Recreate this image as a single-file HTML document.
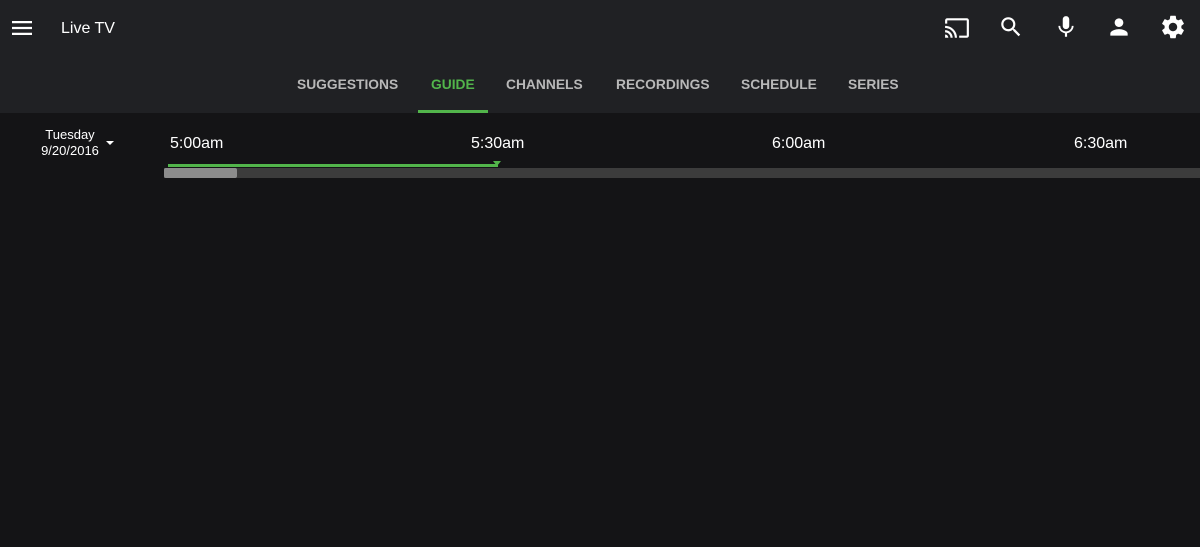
<!DOCTYPE html>
<html><head><style>
body{margin:0;width:1200px;height:547px;background:#141416;font-family:"Liberation Sans",sans-serif;overflow:hidden;position:relative;color:#fff}
.hdr{position:absolute;left:0;top:0;width:1200px;height:113px;background:#202124}
.t{position:absolute;white-space:nowrap}
.tab{position:absolute;top:77px;font-size:13.8px;font-weight:bold;color:#b8b8b8}
svg{position:absolute}
</style></head><body>
<div class="hdr"></div>
<svg style="left:10px;top:16px" width="24" height="24" viewBox="0 0 24 24"><path fill="#fff" d="M2 5h20v2.2H2zM2 10.9h20v2.2H2zM2 16.8h20v2.2H2z"/></svg>
<div class="t" style="left:61px;top:20px;font-size:16px">Live TV</div>
<svg style="left:944px;top:15px" width="26" height="26" viewBox="0 0 24 24"><path fill="#fff" d="M21 3H3c-1.1 0-2 .9-2 2v3h2V5h18v14h-7v2h7c1.1 0 2-.9 2-2V5c0-1.1-.9-2-2-2zM1 18v3h3c0-1.660-1.34-3-3-3zm0-4v2c2.760 0 5 2.240 5 5h2c0-3.870-3.130-7-7-7zm0-4v2c4.970 0 9 4.030 9 9h2c0-6.080-4.930-11-11-11z"/></svg>
<svg style="left:998px;top:14px" width="26" height="26" viewBox="0 0 24 24"><path fill="#fff" d="M15.5 14h-.79l-.28-.27A6.47 6.47 0 0016 9.5 6.5 6.5 0 109.5 16c1.61 0 3.09-.59 4.23-1.57l.27.28v.79l5 4.99L20.49 19l-4.99-5zm-6 0C7.01 14 5 11.99 5 9.5S7.01 5 9.5 5 14 7.01 14 9.5 11.99 14 9.5 14z"/></svg>
<svg style="left:1053px;top:14px" width="26" height="26" viewBox="0 0 24 24"><path fill="#fff" d="M12 14c1.66 0 2.99-1.34 2.99-3L15 5c0-1.66-1.34-3-3-3S9 3.34 9 5v6c0 1.66 1.34 3 3 3zm5.3-3c0 3-2.54 5.1-5.3 5.1S6.7 14 6.7 11H5c0 3.41 2.72 6.230 6 6.72V21h2v-3.28c3.28-.48 6-3.3 6-6.72h-1.7z"/></svg>
<svg style="left:1106px;top:14px" width="26" height="26" viewBox="0 0 24 24"><path fill="#fff" d="M12 12c2.21 0 4-1.79 4-4s-1.79-4-4-4-4 1.79-4 4 1.79 4 4 4zm0 2c-2.67 0-8 1.34-8 4v2h16v-2c0-2.66-5.33-4-8-4z"/></svg>
<svg style="left:1159px;top:13px" width="28" height="28" viewBox="0 0 24 24"><path fill="#fff" d="M19.14 12.94c.04-.3.06-.61.06-.94 0-.32-.02-.64-.07-.94l2.030-1.58a.49.49 0 00.12-.61l-1.92-3.32a.488.488 0 00-.59-.22l-2.39.96c-.5-.38-1.03-.7-1.62-.94l-.36-2.54a.484.484 0 00-.48-.41h-3.84c-.24 0-.43.17-.47.41l-.36 2.54c-.59.24-1.13.57-1.62.94l-2.39-.96c-.22-.08-.47 0-.59.22L2.74 8.87c-.12.21-.08.47.12.61l2.03 1.58c-.05.3-.09.63-.09.94s.02.64.07.94l-2.03 1.58a.49.49 0 00-.12.61l1.92 3.32c.12.22.37.29.59.22l2.39-.96c.5.38 1.03.7 1.62.94l.36 2.54c.05.24.24.41.48.41h3.84c.24 0 .44-.17.47-.41l.36-2.54c.59-.24 1.13-.56 1.62-.94l2.39.96c.22.08.47 0 .59-.22l1.92-3.32c.12-.22.07-.47-.12-.61l-2.01-1.58zM12 15.6c-1.98 0-3.6-1.62-3.6-3.6s1.62-3.6 3.6-3.6 3.6 1.62 3.6 3.6-1.62 3.6-3.6 3.6z"/></svg>
<div class="tab" style="left:297px">SUGGESTIONS</div>
<div class="tab" style="left:431px;color:#52b54b">GUIDE</div>
<div class="tab" style="left:506px">CHANNELS</div>
<div class="tab" style="left:616px">RECORDINGS</div>
<div class="tab" style="left:741px">SCHEDULE</div>
<div class="tab" style="left:848px">SERIES</div>
<div style="position:absolute;left:418px;top:110px;width:70px;height:3px;background:#52b54b"></div>
<div class="t" style="left:30px;top:127px;width:80px;text-align:center;font-size:13px;line-height:16px">Tuesday<br>9/20/2016</div>
<div style="position:absolute;left:106px;top:141px;border:4px solid transparent;border-top-color:#fff;border-bottom:0"></div>
<div class="t" style="left:170px;top:135px;font-size:16px">5:00am</div>
<div class="t" style="left:471px;top:135px;font-size:16px">5:30am</div>
<div class="t" style="left:772px;top:135px;font-size:16px">6:00am</div>
<div class="t" style="left:1074px;top:135px;font-size:16px">6:30am</div>
<div style="position:absolute;left:168px;top:164px;width:330px;height:3px;background:#52b54b"></div>
<div style="position:absolute;left:493px;top:161px;border:4px solid transparent;border-top:5px solid #52b54b;border-bottom:0"></div>
<div style="position:absolute;left:164px;top:168px;width:1036px;height:10px;background:#3c3c3c"></div>
<div style="position:absolute;left:164px;top:168px;width:73px;height:10px;background:#8c8c8c;border-radius:2px"></div>
</body></html>
